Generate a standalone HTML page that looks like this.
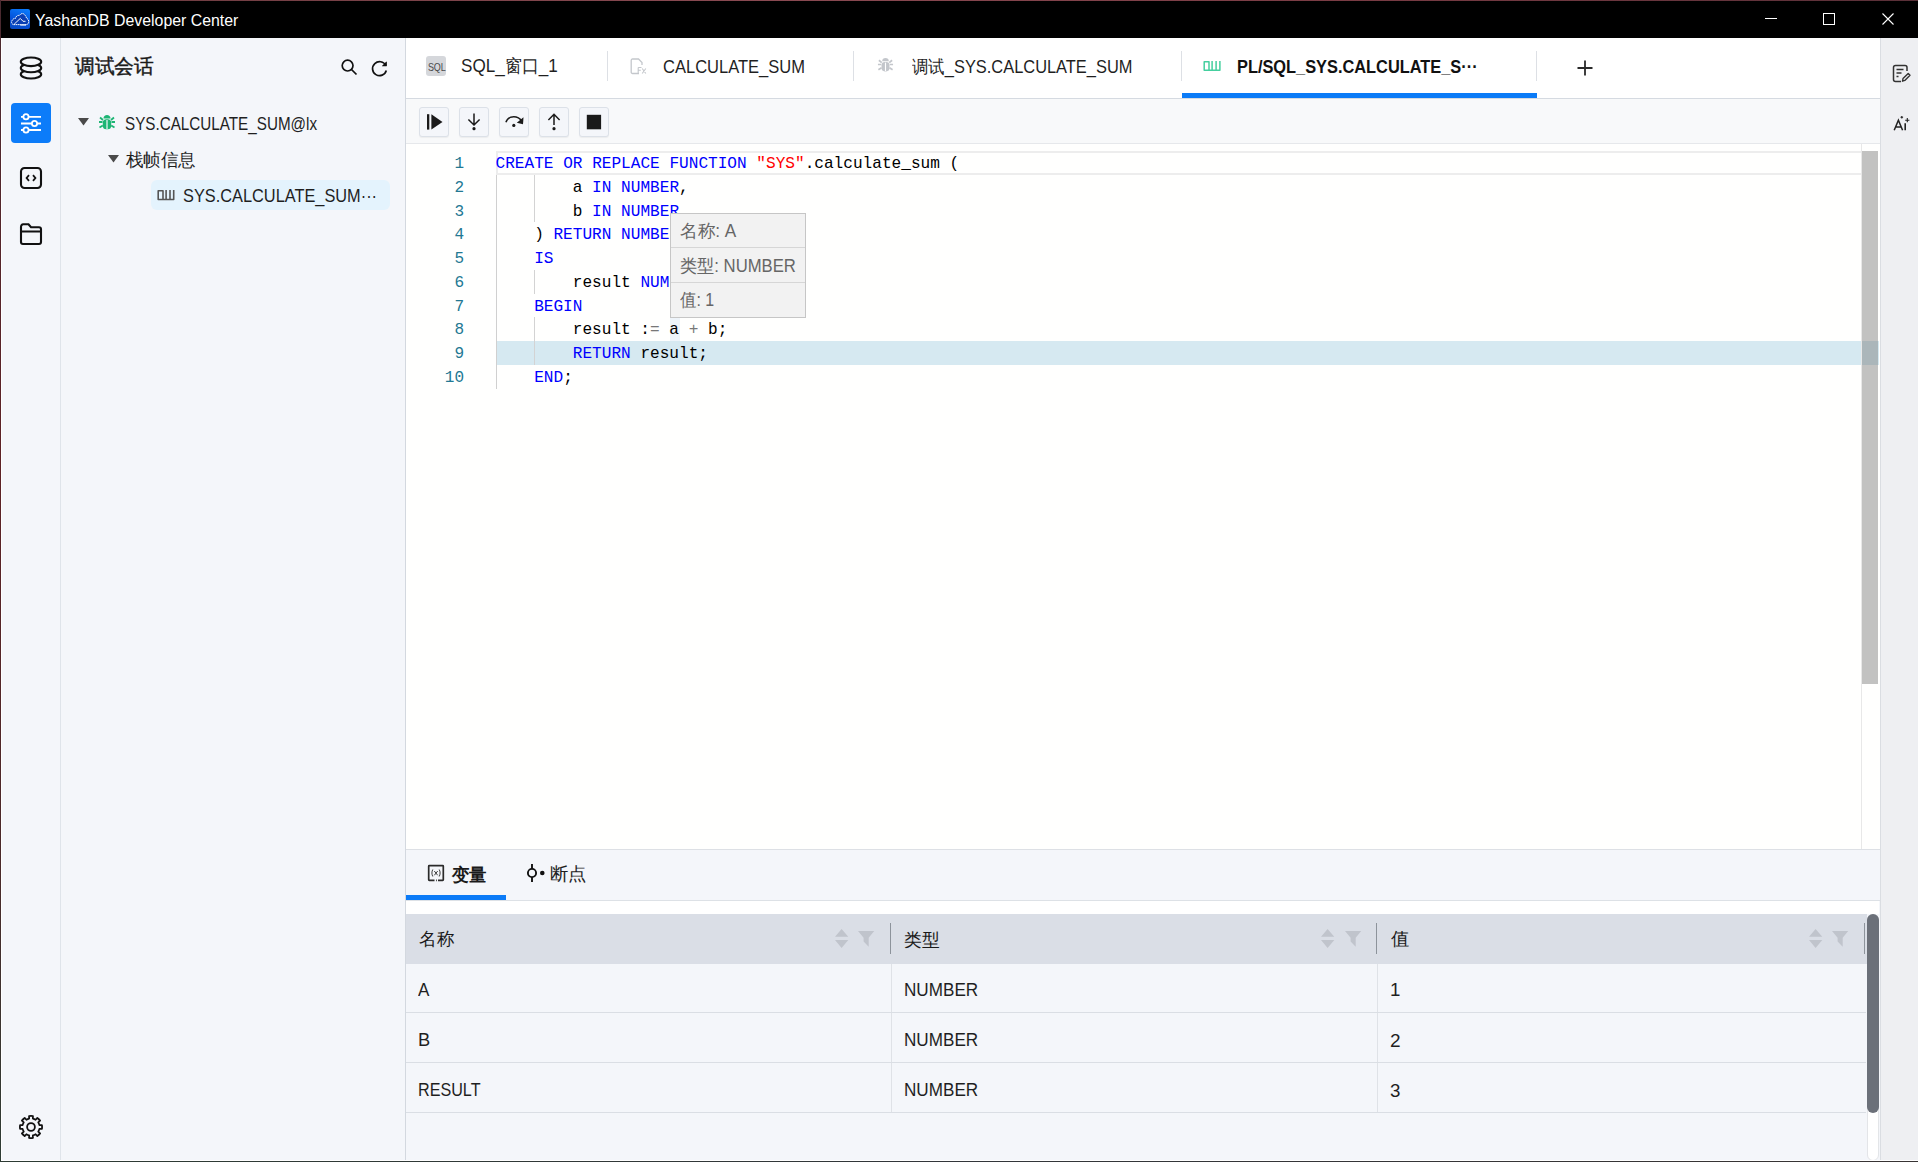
<!DOCTYPE html>
<html><head><meta charset="utf-8">
<style>
*{margin:0;padding:0;box-sizing:border-box}
html,body{width:1918px;height:1162px;overflow:hidden;background:#f4f6fa;font-family:"Liberation Sans",sans-serif;color:#1f1f1f}
.a{position:absolute}
.t{position:absolute;white-space:pre;line-height:1;font-size:18px;transform-origin:0 0}
svg{position:absolute;overflow:visible}
.code{position:absolute;font-family:"Liberation Mono",monospace;font-size:16.1px;line-height:23.75px;white-space:pre;color:#000}
.k{color:#0000ff}.s{color:#ff0000}.o{color:#777}
.ln{position:absolute;white-space:pre;font-family:"Liberation Mono",monospace;font-size:16px;line-height:23.75px;color:#237893;text-align:right;width:60px}
</style></head><body>
<!-- frame -->
<div class="a" style="left:0;top:0;width:1918px;height:38px;background:#000"></div>
<div class="a" style="left:0;top:0;width:1918px;height:1px;background:linear-gradient(90deg,#6a3a3e,#8a4a52 40%,#7a3c44 70%,#5a3038)"></div>

<!-- title -->
<div class="a" style="left:10px;top:9px;width:20px;height:20px;border-radius:2px;background:linear-gradient(200deg,#0b80ff,#0550d8 60%,#0848c0)"></div>
<svg style="left:10px;top:9px" width="20" height="20" viewBox="0 0 20 20"><path d="M3.5 15.6C1.6 15.3 0.9 12.6 2.3 11.2C3 9.8 4.3 9.3 5.4 9.5C6 7 7.8 6 9.4 6.6C10.5 4.2 13.6 3.8 15 6.2C15.8 7 16.3 8 16.5 9.2C18.4 9.8 19.2 12.2 18.5 13.9C18 15.1 17.2 15.6 16.2 15.6Z" fill="#0a3fb4" stroke="#fff" stroke-width="0.95" stroke-dasharray="1.6 0.5"/><path d="M4.2 15.2L10.3 9.4L13 12.3H15.5M10.3 16.1H16" fill="none" stroke="#fff" stroke-width="0.95"/></svg>
<!-- window controls -->
<div class="a" style="left:1765px;top:18px;width:12px;height:1px;background:#fff"></div>
<div class="a" style="left:1823px;top:13px;width:12px;height:12px;border:1px solid #fff"></div>
<svg style="left:1882px;top:13px" width="12" height="12" viewBox="0 0 12 12"><path d="M0.5 0.5 L11.5 11.5 M11.5 0.5 L0.5 11.5" stroke="#fff" stroke-width="1.1"/></svg>

<!-- left rail -->
<div class="a" style="left:1px;top:38px;width:60px;height:1123px;background:#f4f6fa;border-right:1px solid #dfe4ea"></div>
<!-- sidebar -->
<div class="a" style="left:61px;top:38px;width:345px;height:1123px;background:#f4f6fa;border-right:1px solid #d3d8df"></div>


<!-- left rail icons -->
<svg style="left:19px;top:56px" width="24" height="24" viewBox="0 0 24 24" fill="#f4f6fa" stroke="#111" stroke-width="2.1">
<ellipse cx="12" cy="18.2" rx="10.2" ry="4.3"/><ellipse cx="12" cy="12" rx="10.2" ry="4.3"/><ellipse cx="12" cy="5.8" rx="10.2" ry="4.3"/></svg>
<div class="a" style="left:11px;top:103px;width:40px;height:40px;border-radius:4px;background:#0c7cf9"></div>
<svg style="left:20px;top:112px" width="22" height="22" viewBox="0 0 22 22" stroke="#fff" stroke-width="1.8" fill="#0c7cf9">
<path d="M1 4.8H21M1 11.5H21M1 18H21"/><circle cx="6" cy="4.8" r="2.6"/><circle cx="14.5" cy="11.5" r="2.6"/><circle cx="6" cy="18" r="2.6"/></svg>
<svg style="left:19px;top:166px" width="24" height="24" viewBox="0 0 24 24" fill="none" stroke="#111" stroke-width="2.1">
<rect x="2" y="2" width="20" height="20" rx="3.5"/><path d="M10 9.2L7.6 12L10 14.8M14 9.2L16.4 12L14 14.8" stroke-width="1.8"/></svg>
<svg style="left:19px;top:222px" width="24" height="24" viewBox="0 0 24 24" fill="none" stroke="#111" stroke-width="2.1">
<path d="M2 20V5C2 3.6 2.8 2.3 4.2 2.3H9.5L12 5.2H20C21.2 5.2 22 6 22 7.2V20C22 21.2 21.2 22 20 22H4C2.8 22 2 21.2 2 20Z M2 9.5H22"/></svg>
<svg style="left:19px;top:1115px" width="24" height="24" viewBox="0 0 24 24" fill="none" stroke="#111" stroke-width="1.8" stroke-linejoin="round"><path d="M10.14 3.60L10.07 1.07A11.1 11.1 0 0 1 13.93 1.07L13.86 3.60A8.6 8.6 0 0 1 16.62 4.75L18.37 2.91A11.1 11.1 0 0 1 21.09 5.63L19.25 7.38A8.6 8.6 0 0 1 20.40 10.14L22.93 10.07A11.1 11.1 0 0 1 22.93 13.93L20.40 13.86A8.6 8.6 0 0 1 19.25 16.62L21.09 18.37A11.1 11.1 0 0 1 18.37 21.09L16.62 19.25A8.6 8.6 0 0 1 13.86 20.40L13.93 22.93A11.1 11.1 0 0 1 10.07 22.93L10.14 20.40A8.6 8.6 0 0 1 7.38 19.25L5.63 21.09A11.1 11.1 0 0 1 2.91 18.37L4.75 16.62A8.6 8.6 0 0 1 3.60 13.86L1.07 13.93A11.1 11.1 0 0 1 1.07 10.07L3.60 10.14A8.6 8.6 0 0 1 4.75 7.38L2.91 5.63A11.1 11.1 0 0 1 5.63 2.91L7.38 4.75A8.6 8.6 0 0 1 10.14 3.60Z"/><circle cx="12" cy="12" r="3.9"/></svg>

<!-- sidebar content -->
<svg style="left:341px;top:59px" width="17" height="17" viewBox="0 0 17 17" fill="none" stroke="#111" stroke-width="1.7"><circle cx="6.6" cy="6.6" r="5.4"/><path d="M10.5 10.5L15.5 15.5"/></svg>
<svg style="left:371px;top:60px" width="17" height="17" viewBox="0 0 17 17" fill="none" stroke="#111" stroke-width="1.7"><path d="M14.8 5.5A7 7 0 1 0 15.3 10.5"/><path d="M15.6 1.5V6.2H10.9" stroke-width="0" fill="#111"/><path d="M11.2 6.1L15.6 6.1L15.6 1.6Z" fill="#111" stroke="none"/></svg>

<svg style="left:78px;top:118px" width="11" height="8" viewBox="0 0 11 8"><path d="M0 0H11L5.5 7.5Z" fill="#4a4a4a"/></svg>
<svg style="left:98px;top:113px" width="18" height="18" viewBox="0 0 18 18" fill="#1eb574">
<path d="M5.5 5.5C5.5 3.2 7 2 9 2S12.5 3.2 12.5 5.5Z"/><rect x="4.8" y="6.3" width="8.4" height="10" rx="3.5"/>
<path d="M1 9H4.5M13.5 9H17M1.5 14.5L4.8 12.5M16.5 14.5L13.2 12.5M2 4.5L5 7M16 4.5L13 7" stroke="#1eb574" stroke-width="1.8"/><path d="M9 7V16" stroke="#f4f6fa" stroke-width="1.2"/></svg>
<svg style="left:108px;top:155px" width="11" height="8" viewBox="0 0 11 8"><path d="M0 0H11L5.5 7.5Z" fill="#4a4a4a"/></svg>
<div class="a" style="left:151px;top:180px;width:239px;height:30px;border-radius:6px;background:#e4f3fd"></div>
<svg style="left:157px;top:189px" width="19" height="12" viewBox="0 0 19 12" fill="none" stroke="#555" stroke-width="1.6" stroke-linejoin="round"><path d="M1.2 1.7H6V10.5H1.2Z M6 10.5H16.7V0.95 M9.1 0.95V10.5 M13 0.95V10.5"/></svg>


<!-- right rail -->
<div class="a" style="left:1880px;top:38px;width:38px;height:1123px;background:#eeeff2;border-left:1px solid #dadde2"></div>

<!-- tab bar -->
<div class="a" style="left:406px;top:38px;width:1474px;height:61px;background:#fff;border-bottom:1px solid #d5dae1"></div>
<!-- toolbar -->
<div class="a" style="left:406px;top:99px;width:1474px;height:45px;background:#f8f9fa;border-bottom:1px solid #e6e8eb"></div>
<!-- editor -->
<div class="a" style="left:406px;top:144px;width:1474px;height:705px;background:#fffffe"></div>
<!-- bottom panel -->
<div class="a" style="left:406px;top:849px;width:1474px;height:312px;background:#f4f6fa;border-top:1px solid #dde0e5"></div>

<!-- tabs -->
<div class="a" style="left:426px;top:56px;width:20px;height:20px;border-radius:3px;background:#d5d7db"></div>
<div class="t" style="left:427.5px;top:61.5px;font-size:11px;color:#4a4a4a;transform:scaleX(0.82);letter-spacing:-0.2px">SQL</div>
<div class="a" style="left:607px;top:51px;width:1px;height:30px;background:#dde0e5"></div>
<svg style="left:630px;top:58px" width="17" height="17" viewBox="0 0 17 17" fill="none" stroke="#c4c7cc" stroke-width="1.3">
<path d="M9 15.5H2.5C1.8 15.5 1.2 15 1.2 14.2V2.3C1.2 1.6 1.8 1 2.5 1H8.5L12 4.5V7"/><path d="M8.2 9.5H11.5M8.2 9.5V15.5M8.2 12.3H10.8M12.2 10.5L15.8 15.5M15.8 10.5L12.2 15.5" stroke-width="1.1"/></svg>
<div class="a" style="left:853px;top:51px;width:1px;height:30px;background:#dde0e5"></div>
<svg style="left:877px;top:56px" width="17" height="17" viewBox="0 0 18 18" fill="#c3c6cb">
<path d="M5.5 5.5C5.5 3.2 7 2 9 2S12.5 3.2 12.5 5.5Z"/><rect x="4.8" y="6.3" width="8.4" height="10" rx="3.5"/>
<path d="M1 9H4.5M13.5 9H17M1.5 14.5L4.8 12.5M16.5 14.5L13.2 12.5M2 4.5L5 7M16 4.5L13 7" stroke="#c3c6cb" stroke-width="1.8"/><path d="M9 7V16" stroke="#fff" stroke-width="1.2"/></svg>
<div class="a" style="left:1181px;top:51px;width:1px;height:30px;background:#dde0e5"></div>
<svg style="left:1203px;top:60px" width="19" height="12" viewBox="0 0 19 12" fill="none" stroke="#45cf9f" stroke-width="1.5" stroke-linejoin="round"><path d="M1.2 1.7H6V10.2H1.2Z M6 10.2H16.9V0.95 M9.1 0.95V10.2 M13.1 0.95V10.2"/></svg>
<div class="a" style="left:1182px;top:93px;width:355px;height:5px;background:#0b7bf7"></div>
<div class="a" style="left:1536px;top:51px;width:1px;height:30px;background:#dde0e5"></div>
<svg style="left:1577px;top:60px" width="16" height="16" viewBox="0 0 16 16" stroke="#2a2a2a" stroke-width="1.8"><path d="M8 0.5V15.5M0.5 8H15.5"/></svg>

<!-- right rail icons -->
<svg style="left:1892px;top:64px" width="19" height="19" viewBox="0 0 19 19" fill="none" stroke="#333" stroke-width="1.5">
<path d="M9 17.5H3.5C2.4 17.5 1.5 16.6 1.5 15.5V3.5C1.5 2.4 2.4 1.5 3.5 1.5H13C14.1 1.5 15 2.4 15 3.5V7"/><path d="M4.5 5.5H11.5M4.5 9H9.5M4.5 12.5H6.5" stroke-width="1.4"/><path d="M10.5 17.2L11 14.6L16.2 9.4L18 11.2L12.8 16.4Z" stroke-width="1.4" stroke-linejoin="round"/></svg>
<svg style="left:1892px;top:114px" width="19" height="19" viewBox="0 0 19 19" fill="none" stroke="#222" stroke-width="1.5"><path d="M2.2 16.3L6.4 6.3L10.6 16.3M3.6 12.9H9.2"/><path d="M13.2 9.2V16.3" stroke-width="1.6"/><path d="M9.8 1.9V4.5M8.5 3.2H11.1M15.3 4.1V8.3M13.2 6.2H17.4" stroke-width="1.1"/></svg>

<!-- toolbar buttons -->
<div class="a" style="left:419px;top:107px;width:30px;height:30px;border:1px solid #dce1e8;border-radius:3px;background:#f4f6fa;box-shadow:0 1px 1px rgba(0,0,0,0.05)"></div>
<div class="a" style="left:459px;top:107px;width:30px;height:30px;border:1px solid #dce1e8;border-radius:3px;background:#f4f6fa;box-shadow:0 1px 1px rgba(0,0,0,0.05)"></div>
<div class="a" style="left:499px;top:107px;width:30px;height:30px;border:1px solid #dce1e8;border-radius:3px;background:#f4f6fa;box-shadow:0 1px 1px rgba(0,0,0,0.05)"></div>
<div class="a" style="left:539px;top:107px;width:30px;height:30px;border:1px solid #dce1e8;border-radius:3px;background:#f4f6fa;box-shadow:0 1px 1px rgba(0,0,0,0.05)"></div>
<div class="a" style="left:579px;top:107px;width:30px;height:30px;border:1px solid #dce1e8;border-radius:3px;background:#f4f6fa;box-shadow:0 1px 1px rgba(0,0,0,0.05)"></div>
<svg style="left:419px;top:107px" width="30" height="30" viewBox="0 0 30 30" fill="#1a1a1a"><rect x="8" y="7.2" width="2.3" height="15.4"/><path d="M12.4 7.2L23.5 14.9L12.4 22.6Z"/></svg>
<svg style="left:459px;top:107px" width="30" height="30" viewBox="0 0 30 30" fill="none" stroke="#1a1a1a" stroke-width="1.5"><path d="M15 6.5V17.5M9.4 12.5L15 18L20.6 12.5"/><circle cx="15" cy="21.7" r="1.6" fill="#1a1a1a" stroke="none"/></svg>
<svg style="left:499px;top:107px" width="30" height="30" viewBox="0 0 30 30" fill="none" stroke="#1a1a1a" stroke-width="1.5"><path d="M6.9 15.3C8.3 11.2 11.2 9.8 14.8 9.8C18.2 9.8 21 11.5 23.3 14.5"/><path d="M24.5 10.2L24 17.3L17.8 15.8Z" fill="#1a1a1a" stroke="none"/><circle cx="14.8" cy="18.4" r="1.6" fill="#1a1a1a" stroke="none"/></svg>
<svg style="left:539px;top:107px" width="30" height="30" viewBox="0 0 30 30" fill="none" stroke="#1a1a1a" stroke-width="1.5"><path d="M15 7V18M9.4 13L15 7.3L20.6 13"/><circle cx="15" cy="21.7" r="1.6" fill="#1a1a1a" stroke="none"/></svg>
<svg style="left:579px;top:107px" width="30" height="30" viewBox="0 0 30 30"><rect x="7.8" y="7.8" width="14.3" height="14.5" fill="#1a1a1a"/></svg>



<!-- editor content -->
<div class="a" style="left:496px;top:341.0px;width:1383px;height:23.75px;background:#d6e9f1"></div>
<div class="a" style="left:496px;top:151px;width:1365px;height:24px;border:2px solid #ededed;border-right:none"></div>
<div class="a" style="left:496px;top:175px;width:1px;height:214px;background:#d0d0d0"></div>
<div class="a" style="left:534px;top:174.75px;width:1px;height:23.75px;background:#d3d3d3"></div>
<div class="a" style="left:534px;top:198.50px;width:1px;height:23.75px;background:#d3d3d3"></div>
<div class="a" style="left:534px;top:269.75px;width:1px;height:23.75px;background:#d3d3d3"></div>
<div class="a" style="left:534px;top:317.25px;width:1px;height:23.75px;background:#d3d3d3"></div>
<div class="a" style="left:534px;top:341.00px;width:1px;height:23.75px;background:#d3d3d3"></div>
<div class="a" style="left:670px;top:317.25px;width:10px;height:23.75px;background:#eef4fa"></div>
<div id="gutter" class="ln" style="left:404px;top:153px">1
2
3
4
5
6
7
8
9
10
</div>
<div id="code" class="code" style="left:495.5px;top:153px"><span class="k">CREATE</span> <span class="k">OR</span> <span class="k">REPLACE</span> <span class="k">FUNCTION</span> <span class="s">"SYS"</span>.calculate_sum (
        a <span class="k">IN</span> <span class="k">NUMBER</span>,
        b <span class="k">IN</span> <span class="k">NUMBER</span>
    ) <span class="k">RETURN</span> <span class="k">NUMBER</span>
    <span class="k">IS</span>
        result <span class="k">NUMBER</span>;
    <span class="k">BEGIN</span>
        result :<span class="o">=</span> a <span class="o">+</span> b;
        <span class="k">RETURN</span> result;
    <span class="k">END</span>;</div>
<div class="a" style="left:1861px;top:144px;width:1px;height:705px;background:#e8e8e8"></div>
<div class="a" style="left:1862px;top:151px;width:16px;height:533px;background:rgba(120,120,120,0.45)"></div>
<div class="a" style="left:670px;top:213px;width:136px;height:105px;background:#f2f2f2;border:1px solid #c6c6c6"></div>
<div class="a" style="left:671px;top:247px;width:134px;height:1px;background:#d6d6d6"></div>
<div class="a" style="left:671px;top:282px;width:134px;height:1px;background:#d6d6d6"></div>

<!-- bottom panel content -->
<div class="a" style="left:406px;top:895px;width:100px;height:5px;background:#0b7bf7"></div>
<div class="a" style="left:406px;top:900px;width:1474px;height:1px;background:#dde1e6"></div>
<div class="a" style="left:406px;top:901px;width:1473px;height:13px;background:#fff"></div>
<svg style="left:427px;top:864px" width="18" height="18" viewBox="0 0 18 18" fill="none" stroke="#2a2a2a" stroke-width="1.7"><path d="M7.5 16.3H2.3C1.9 16.3 1.7 16.1 1.7 15.7V2.3C1.7 1.9 1.9 1.7 2.3 1.7H15.7C16.1 1.7 16.3 1.9 16.3 2.3V15.7C16.3 16.1 16.1 16.3 15.7 16.3H11M9 16.3H9.8"/><path d="M5.8 5.5C4.6 7.5 4.6 10.5 5.8 12.5M12.2 5.5C13.4 7.5 13.4 10.5 12.2 12.5M7.3 7L10.7 11.3M10.7 7L7.3 11.3" stroke-width="0.9"/></svg>
<svg style="left:525px;top:863px" width="21" height="20" viewBox="0 0 21 20" fill="none" stroke="#111" stroke-width="1.9"><path d="M7 1V19"/><circle cx="7" cy="10" r="4.1" fill="#f4f6fa"/><circle cx="17.3" cy="10" r="2.3" fill="#111" stroke="none"/></svg>
<div class="a" style="left:406px;top:914px;width:1461px;height:50px;background:#dadee6"></div>
<div class="a" style="left:890px;top:923px;width:1px;height:31px;background:#8d939b"></div>
<div class="a" style="left:1376px;top:923px;width:1px;height:31px;background:#8d939b"></div>
<div class="a" style="left:1864px;top:923px;width:1px;height:31px;background:#8d939b"></div>
<div class="a" style="left:891px;top:964px;width:1px;height:149px;background:#dfe2e7"></div>
<div class="a" style="left:1377px;top:964px;width:1px;height:149px;background:#dfe2e7"></div>
<div class="a" style="left:406px;top:1012px;width:1460px;height:1px;background:#dadee4"></div>
<div class="a" style="left:406px;top:1062px;width:1460px;height:1px;background:#dadee4"></div>
<div class="a" style="left:406px;top:1112px;width:1460px;height:1px;background:#dadee4"></div>
<svg style="left:834.8px;top:929px" width="14" height="19" viewBox="0 0 14 19" fill="#c0c4cc"><path d="M0 7.8L6.6 0L13.3 7.8Z M0 11.1H13.3L6.6 19Z"/></svg>
<svg style="left:857.9px;top:931px" width="17" height="16" viewBox="0 0 17 16" fill="#c0c4cc"><path d="M0 0H16.2L10.7 6.7V15.7L5.6 10.5V6.7Z"/></svg>
<svg style="left:1321.0px;top:929px" width="14" height="19" viewBox="0 0 14 19" fill="#c0c4cc"><path d="M0 7.8L6.6 0L13.3 7.8Z M0 11.1H13.3L6.6 19Z"/></svg>
<svg style="left:1345.0px;top:931px" width="17" height="16" viewBox="0 0 17 16" fill="#c0c4cc"><path d="M0 0H16.2L10.7 6.7V15.7L5.6 10.5V6.7Z"/></svg>
<svg style="left:1808.5px;top:929px" width="14" height="19" viewBox="0 0 14 19" fill="#c0c4cc"><path d="M0 7.8L6.6 0L13.3 7.8Z M0 11.1H13.3L6.6 19Z"/></svg>
<svg style="left:1831.8px;top:931px" width="17" height="16" viewBox="0 0 17 16" fill="#c0c4cc"><path d="M0 0H16.2L10.7 6.7V15.7L5.6 10.5V6.7Z"/></svg>
<div class="a" style="left:1867px;top:914px;width:12px;height:247px;border-radius:6px;background:#fff;border:1px solid #e3e5e8"></div>
<div class="a" style="left:1867px;top:914px;width:12px;height:199px;border-radius:6px;background:#6b7079"></div>

<div class="a" style="left:0;top:0;width:1px;height:1162px;background:linear-gradient(180deg,#4a2a30,#5e2226 40%,#4a2a2a 75%,#2e3d35)"></div>
<div class="a" style="left:1px;top:38px;width:1px;height:1123px;background:#fff"></div>
<div class="a" style="left:1px;top:1160px;width:1917px;height:1px;background:#fff"></div>
<div class="a" style="left:0;top:1161px;width:1918px;height:1px;background:linear-gradient(90deg,#2d3b34,#33363a 50%,#383434)"></div>
<!--TEXT-->
<div class="t" id="T1" style="left:34.70px;top:12.50px;font-size:16px;font-weight:400;color:#fff;transform:scaleX(0.9914)">YashanDB Developer Center</div>
<div class="t" id="T2" style="left:74.54px;top:57.11px;font-size:19.5px;font-weight:400;color:#1a1a1a;transform:scaleX(0.9873);-webkit-text-stroke:0.45px #1a1a1a">调试会话</div>
<div class="t" id="T3" style="left:125.37px;top:114.70px;font-size:18px;font-weight:400;color:#1f1f1f;transform:scaleX(0.8459)">SYS.CALCULATE_SUM@lx</div>
<div class="t" id="T4" style="left:125.90px;top:152.46px;font-size:17.5px;font-weight:400;color:#1f1f1f;transform:scaleX(0.9708)">栈帧信息</div>
<div class="t" id="T5" style="left:182.67px;top:186.60px;font-size:18px;font-weight:400;color:#1f1f1f;transform:scaleX(0.9080)">SYS.CALCULATE_SUM···</div>
<div class="t" id="T6" style="left:460.53px;top:57.20px;font-size:18px;font-weight:400;color:#1f1f1f;transform:scaleX(0.9493)">SQL_窗口_1</div>
<div class="t" id="T7" style="left:662.85px;top:57.60px;font-size:18px;font-weight:400;color:#1f1f1f;transform:scaleX(0.9181)">CALCULATE_SUM</div>
<div class="t" id="T8" style="left:911.84px;top:57.97px;font-size:18px;font-weight:400;color:#1f1f1f;transform:scaleX(0.9118)">调试_SYS.CALCULATE_SUM</div>
<div class="t" id="T9" style="left:1237.17px;top:57.80px;font-size:18px;font-weight:700;color:#111;transform:scaleX(0.9091)">PL/SQL_SYS.CALCULATE_S···</div>
<div class="t" id="T10" style="left:679.97px;top:223.34px;font-size:17.5px;font-weight:300;color:#666;transform:scaleX(0.9811)">名称: A</div>
<div class="t" id="T11" style="left:680.04px;top:258.41px;font-size:17.5px;font-weight:300;color:#666;transform:scaleX(0.9536)">类型: NUMBER</div>
<div class="t" id="T12" style="left:680.39px;top:291.92px;font-size:17.5px;font-weight:300;color:#666;transform:scaleX(0.9100)">值: 1</div>
<div class="t" id="T13" style="left:451.55px;top:866.87px;font-size:17.5px;font-weight:700;color:#1a1a1a;transform:scaleX(0.9656)">变量</div>
<div class="t" id="T14" style="left:550.26px;top:866.18px;font-size:17.5px;font-weight:400;color:#1f1f1f;transform:scaleX(1.0201)">断点</div>
<div class="t" id="T15" style="left:418.82px;top:931.41px;font-size:17.5px;font-weight:500;color:#1a1a1a;transform:scaleX(0.9742)">名称</div>
<div class="t" id="T16" style="left:904.32px;top:932.11px;font-size:17.5px;font-weight:500;color:#1a1a1a;transform:scaleX(0.9856)">类型</div>
<div class="t" id="T17" style="left:1391.03px;top:930.73px;font-size:17.5px;font-weight:500;color:#1a1a1a;transform:scaleX(1.0142)">值</div>
<div class="t" id="T18" style="left:418.34px;top:981.12px;font-size:18.5px;font-weight:400;color:#1f1f1f;transform:scaleX(0.9209)">A</div>
<div class="t" id="T19" style="left:904.42px;top:981.00px;font-size:18.5px;font-weight:400;color:#1f1f1f;transform:scaleX(0.9255)">NUMBER</div>
<div class="t" id="T20" style="left:1390.33px;top:981.29px;font-size:18.5px;font-weight:400;color:#1f1f1f;transform:scaleX(1.0101)">1</div>
<div class="t" id="T21" style="left:418.25px;top:1030.55px;font-size:18.5px;font-weight:400;color:#1f1f1f;transform:scaleX(0.9876)">B</div>
<div class="t" id="T22" style="left:904.42px;top:1031.00px;font-size:18.5px;font-weight:400;color:#1f1f1f;transform:scaleX(0.9255)">NUMBER</div>
<div class="t" id="T23" style="left:1390.38px;top:1031.76px;font-size:18.5px;font-weight:400;color:#1f1f1f;transform:scaleX(1.0281)">2</div>
<div class="t" id="T24" style="left:418.01px;top:1080.50px;font-size:18.5px;font-weight:400;color:#1f1f1f;transform:scaleX(0.8729)">RESULT</div>
<div class="t" id="T25" style="left:904.42px;top:1081.00px;font-size:18.5px;font-weight:400;color:#1f1f1f;transform:scaleX(0.9255)">NUMBER</div>
<div class="t" id="T26" style="left:1390.27px;top:1081.95px;font-size:18.5px;font-weight:400;color:#1f1f1f;transform:scaleX(1.0144)">3</div>
<!--/TEXT-->
</body></html>
